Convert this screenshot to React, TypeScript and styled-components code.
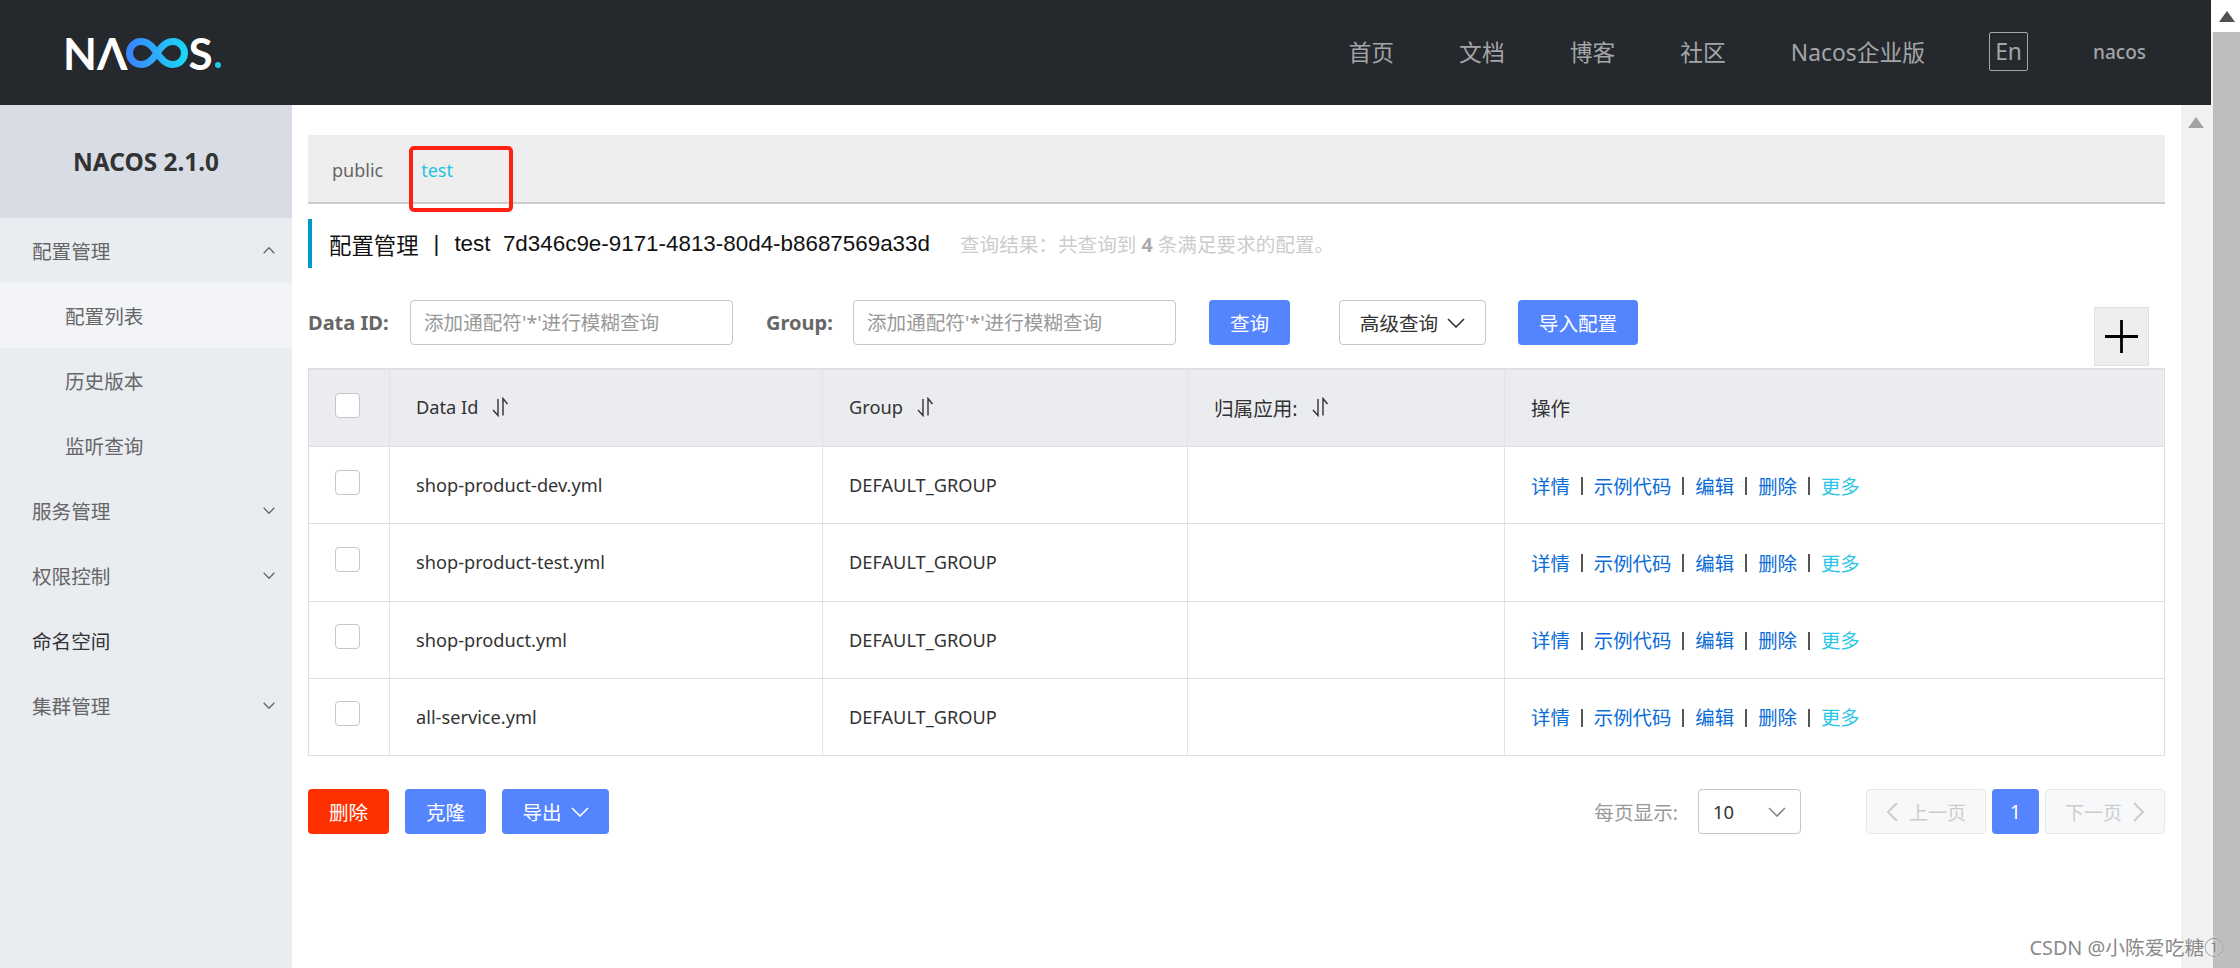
import React from 'react'
import styled, { createGlobalStyle } from 'styled-components'

const GlobalStyle = createGlobalStyle`
  html, body {
    margin: 0;
    padding: 0;
    height: 100%;
    overflow: hidden;
    background: #fff;
  }
  * {
    box-sizing: border-box;
  }
  body {
    font-family: "Noto Sans", "Noto Sans CJK SC", sans-serif;
    color: #333;
  }
`

const Page = styled.div`
  position: relative;
  display: flex;
  width: 2240px;
  height: 968px;
  overflow: hidden;
`

const Main = styled.div`
  flex: 1;
  min-width: 0;
  display: flex;
  flex-direction: column;
`

const OuterScrollbar = styled.div`
  width: 29px;
  display: flex;
  flex-direction: column;
  align-items: center;
  background: #f1f1f1;
`

const OuterScrollTop = styled.div`
  width: 100%;
  height: 32px;
  background: #fff;
  display: flex;
  align-items: center;
  justify-content: center;
  padding-left: 2px;
`

const OuterThumb = styled.div`
  flex: 1;
  width: 27px;
  margin-left: 2px;
  background: #bebebe;
`

const ScrollArrow = styled.div<{ $color: string }>`
  width: 0;
  height: 0;
  border-left: 8px solid transparent;
  border-right: 8px solid transparent;
  border-bottom: 11px solid ${(p) => p.$color};
`

const Header = styled.header`
  height: 105px;
  flex: none;
  display: flex;
  align-items: center;
  background: #25292e;
  padding-left: 63px;
  color: #a3a5a7;
`

const Logo = styled.div`
  display: flex;
  align-items: center;
  height: 30px;
  color: #fff;
  font-family: "Lato", sans-serif;
  font-weight: 700;
  font-size: 44px;
  line-height: 30px;
`

const LogoMark = styled.svg`
  width: 62px;
  height: 30px;
  fill: none;
  margin-left: -1px;
`

const LogoDot = styled.span`
  width: 6px;
  height: 6px;
  margin: 24px 0 0 2px;
  border-radius: 50%;
  background: #1fc8ea;
`

const Nav = styled.nav`
  margin-left: auto;
  display: flex;
  align-items: center;
  padding-right: 65px;
  margin-top: -2px;
`

const NavLink = styled.span`
  font-size: 22.8px;
  margin-right: 65px;
  white-space: nowrap;
`

const LangBox = styled.span`
  width: 39px;
  height: 39px;
  border: 1px solid #a3a5a7;
  border-radius: 2px;
  display: flex;
  align-items: center;
  justify-content: center;
  font-size: 22.8px;
  margin: 0 65px 0 -1px;
`

const UserName = styled.span`
  font-size: 19px;
  font-weight: 500;
`

const Body = styled.div`
  flex: 1;
  min-height: 0;
  display: flex;
`

const Sidebar = styled.aside`
  width: 292px;
  flex: none;
  background: #e9ecf1;
`

const SideTitle = styled.div`
  height: 113px;
  background: #d8dde5;
  display: flex;
  align-items: center;
  justify-content: center;
  font-size: 24.4px;
  font-weight: 700;
  color: #333;
`

const SideItem = styled.div<{ $sub?: boolean; $active?: boolean; $dark?: boolean }>`
  height: 65px;
  display: flex;
  align-items: center;
  justify-content: space-between;
  padding: 0 17px 0 ${(p) => (p.$sub ? 65 : 32)}px;
  font-size: 19.6px;
  color: ${(p) => (p.$dark ? '#333' : '#666')};
  background: ${(p) => (p.$active ? '#f2f4f8' : 'transparent')};
`

const Chevron = styled.svg<{ $up?: boolean; $w: number; $h: number; $color?: string; $weight?: number }>`
  width: ${(p) => p.$w}px;
  height: ${(p) => p.$h}px;
  flex: none;
  fill: none;
  stroke: ${(p) => p.$color || 'currentColor'};
  stroke-width: ${(p) => p.$weight || 1.6};
  transform: ${(p) => (p.$up ? 'rotate(180deg)' : 'none')};
`

const Down = ({ up, w, h, color, weight }: { up?: boolean; w: number; h: number; color?: string; weight?: number }) => (
  <Chevron $up={up} $w={w} $h={h} $color={color} $weight={weight} viewBox="0 0 18 10" preserveAspectRatio="none">
    <polyline points="1,1 9,9 17,1" vectorEffect="non-scaling-stroke" />
  </Chevron>
)

const PageArrow = styled.svg<{ $flip?: boolean }>`
  width: 12px;
  height: 20px;
  flex: none;
  fill: none;
  stroke: #ccc;
  stroke-width: 2;
  transform: ${(p) => (p.$flip ? 'scaleX(-1)' : 'none')};
`

const Content = styled.main`
  flex: 1;
  min-width: 0;
  padding: 30px 16px 0;
`

const InnerScrollbar = styled.div`
  width: 30px;
  flex: none;
  background: #f1f1f1;
  display: flex;
  justify-content: center;
  padding-top: 12px;
`

const TabBar = styled.div`
  position: relative;
  height: 69px;
  background: #eee;
  border-bottom: 2px solid #ccc;
  display: flex;
  align-items: center;
  padding: 2px 0 0 24px;
  gap: 38px;
`

const Tab = styled.span<{ $active?: boolean }>`
  font-size: 18px;
  color: ${(p) => (p.$active ? '#1fc2e0' : '#666')};
`

const RedMark = styled.div`
  position: absolute;
  left: 101px;
  top: 11px;
  width: 104px;
  height: 66px;
  border: 4.5px solid #ff2015;
  border-radius: 5px;
`

const TitleRow = styled.div`
  height: 49px;
  margin-top: 15px;
  border-left: 4px solid #09c;
  padding-left: 17px;
  display: flex;
  align-items: center;
  font-family: "Liberation Sans", "Noto Sans CJK SC", sans-serif;
  font-size: 22.4px;
  color: #111;
  white-space: pre;
`

const TitleSep = styled.span`
  margin: 0 15px;
`

const TitleHint = styled.span`
  margin-left: 30px;
  font-family: "Noto Sans", "Noto Sans CJK SC", sans-serif;
  font-size: 19.6px;
  color: #ccc;

  b {
    color: #aaa;
  }
`

const SearchRow = styled.div`
  height: 45px;
  margin-top: 32px;
  display: flex;
  align-items: flex-start;
`

const FieldLabel = styled.label<{ $w: number; $ml?: number }>`
  width: ${(p) => p.$w}px;
  height: 45px;
  margin-left: ${(p) => p.$ml || 0}px;
  flex: none;
  display: flex;
  align-items: center;
  font-size: 20px;
  font-weight: 700;
  color: #666;
  white-space: nowrap;
`

const TextInput = styled.input`
  width: 323px;
  height: 45px;
  padding: 0 13px;
  border: 1.5px solid #c4c6cf;
  border-radius: 4px;
  background: #fff;
  font-family: inherit;
  font-size: 19.6px;
  outline: none;

  &::placeholder {
    color: #999;
    opacity: 1;
  }
`

const Button = styled.button<{ $w: number; $tone?: 'primary' | 'normal' | 'danger'; $ml?: number }>`
  width: ${(p) => p.$w}px;
  height: 45px;
  margin-left: ${(p) => p.$ml || 0}px;
  flex: none;
  display: inline-flex;
  align-items: center;
  justify-content: center;
  gap: 9px;
  padding: 0;
  font-family: inherit;
  font-size: 19.6px;
  border-radius: 4px;
  border: ${(p) => (p.$tone === 'normal' ? '1.5px solid #c4c6cf' : 'none')};
  background: ${(p) => (p.$tone === 'danger' ? '#ff3000' : p.$tone === 'normal' ? '#fff' : '#5584ff')};
  color: ${(p) => (p.$tone === 'normal' ? '#333' : '#fff')};
`

const PlusButton = styled.div`
  width: 55px;
  height: 59px;
  margin: 7px 16px 0 auto;
  flex: none;
  display: flex;
  align-items: center;
  justify-content: center;
  background: #eee;
  border: 1.5px solid #e0e0e0;

  svg {
    width: 33px;
    height: 33px;
    stroke: #000;
    stroke-width: 2.8;
  }
`

const Table = styled.div`
  margin-top: 23px;
  border-top: 2px solid #dfe0e4;
  border-left: 1px solid #dcdde2;
  border-right: 1px solid #dcdde2;
`

const Row = styled.div<{ $head?: boolean }>`
  display: grid;
  grid-template-columns: 81px 433px 365px 317px 1fr;
  height: ${(p) => (p.$head ? '77px' : '77.25px')};
  background: ${(p) => (p.$head ? '#ebecf0' : '#fff')};
  border-bottom: 1.5px solid #dfe0e4;
`

const Cell = styled.div<{ $head?: boolean }>`
  display: flex;
  align-items: center;
  padding: 0 0 ${(p) => (p.$head ? 2 : 0)}px 26px;
  font-size: 18.2px;
  color: #333;
  border-right: 1px solid #e2e3e7;
  white-space: nowrap;

  &:last-child {
    border-right: none;
  }
`

const CheckCell = styled(Cell)`
  padding: 0 0 6px 26px;
`

const HeadCjk = styled.span`
  font-size: 19.6px;
`

const Checkbox = styled.span`
  width: 25px;
  height: 25px;
  border: 1.5px solid #c4c6cf;
  border-radius: 4px;
  background: #fff;
`

const SortIcon = styled.svg`
  width: 17px;
  height: 20px;
  margin-left: 14px;
  flex: none;
  fill: none;
  stroke: #333;
  stroke-width: 1.4;
`

const Sort = () => (
  <SortIcon viewBox="0 0 17 20">
    <polyline points="1,13 6,18.5 6,2" />
    <polyline points="11,18.5 11,1.5 15.5,7" />
  </SortIcon>
)

const Actions = styled.div`
  display: flex;
  align-items: center;
  font-size: 19.4px;
`

const ActionLink = styled.a<{ $more?: boolean }>`
  color: ${(p) => (p.$more ? '#2bc6e8' : '#0a6cd8')};
`

const ActionSep = styled.span`
  width: 2px;
  height: 18px;
  margin: 2px 11px 0;
  background: #555;
`

const Footer = styled.div`
  margin-top: 33px;
  display: flex;
  align-items: center;
`

const PageSize = styled.span`
  margin-left: auto;
  font-size: 19.6px;
  color: #999;
`

const SelectBox = styled.div`
  width: 103px;
  height: 45px;
  margin-left: 20px;
  padding: 0 14px;
  display: flex;
  align-items: center;
  justify-content: space-between;
  border: 1.5px solid #c4c6cf;
  border-radius: 4px;
  font-size: 18.4px;
  color: #333;
`

const PageButton = styled.div<{ $current?: boolean; $w: number; $ml: number }>`
  width: ${(p) => p.$w}px;
  height: 45px;
  margin-left: ${(p) => p.$ml}px;
  display: flex;
  align-items: center;
  justify-content: center;
  gap: 11px;
  border-radius: 4px;
  font-size: 19px;
  border: ${(p) => (p.$current ? 'none' : '1.5px solid #e6e7eb')};
  background: ${(p) => (p.$current ? '#5584ff' : '#f7f8fa')};
  color: ${(p) => (p.$current ? '#fff' : '#ccc')};
`

const Watermark = styled.div`
  position: absolute;
  right: 16px;
  bottom: 7px;
  font-size: 19.8px;
  color: #8a8a8a;
  text-shadow: 0 0 2px #fff;
  white-space: nowrap;
`

const rows = ['shop-product-dev.yml', 'shop-product-test.yml', 'shop-product.yml', 'all-service.yml']

const App: React.FC = () => {
  return (
    <Page>
      <GlobalStyle />
      <Main>
        <Header>
          <Logo aria-label="NACOS">
            <span>NΛ</span>
            <LogoMark viewBox="0 0 62 30">
              <defs>
                <linearGradient id="inf" x1="0" x2="1" y1="0" y2="0">
                  <stop offset="0" stopColor="#3a86ff" />
                  <stop offset="1" stopColor="#1cd4f6" />
                </linearGradient>
              </defs>
              <path
                d="M31 15C26 8 22 3.5 15 3.5A11.5 11.5 0 0 0 15 26.5C22 26.5 26 22 31 15C36 8 40 3.5 47 3.5A11.5 11.5 0 0 1 47 26.5C40 26.5 36 22 31 15Z"
                stroke="url(#inf)"
                strokeWidth="7"
              />
            </LogoMark>
            <span>S</span>
            <LogoDot />
          </Logo>
          <Nav>
            <NavLink>首页</NavLink>
            <NavLink>文档</NavLink>
            <NavLink>博客</NavLink>
            <NavLink>社区</NavLink>
            <NavLink>Nacos企业版</NavLink>
            <LangBox>En</LangBox>
            <UserName>nacos</UserName>
          </Nav>
        </Header>
        <Body>
          <Sidebar>
            <SideTitle>NACOS 2.1.0</SideTitle>
            <SideItem>
              配置管理
              <Down up w={12} h={7} color="#666" weight={1.3} />
            </SideItem>
            <SideItem $sub $active>配置列表</SideItem>
            <SideItem $sub>历史版本</SideItem>
            <SideItem $sub>监听查询</SideItem>
            {['服务管理', '权限控制'].map((t) => (
              <SideItem key={t}>
                {t}
                <Down w={12} h={7} color="#666" weight={1.3} />
              </SideItem>
            ))}
            <SideItem $dark>命名空间</SideItem>
            <SideItem>
              集群管理
              <Down w={12} h={7} color="#666" weight={1.3} />
            </SideItem>
          </Sidebar>
          <Content>
            <TabBar>
              <Tab>public</Tab>
              <Tab $active>test</Tab>
              <RedMark />
            </TabBar>
            <TitleRow>
              配置管理<TitleSep>|</TitleSep>test  7d346c9e-9171-4813-80d4-b8687569a33d
              <TitleHint>
                查询结果：共查询到 <b>4</b> 条满足要求的配置。
              </TitleHint>
            </TitleRow>
            <SearchRow>
              <FieldLabel $w={102}>Data ID:</FieldLabel>
              <TextInput placeholder="添加通配符'*'进行模糊查询" />
              <FieldLabel $w={87} $ml={33}>Group:</FieldLabel>
              <TextInput placeholder="添加通配符'*'进行模糊查询" />
              <Button $w={81} $ml={33}>查询</Button>
              <Button $w={147} $ml={49} $tone="normal">
                高级查询 <Down w={18} h={10} />
              </Button>
              <Button $w={120} $ml={32}>导入配置</Button>
              <PlusButton>
                <svg viewBox="0 0 33 33">
                  <line x1="0" y1="16.5" x2="33" y2="16.5" />
                  <line x1="16.5" y1="0" x2="16.5" y2="33" />
                </svg>
              </PlusButton>
            </SearchRow>
            <Table>
              <Row $head>
                <CheckCell><Checkbox /></CheckCell>
                <Cell $head>Data Id<Sort /></Cell>
                <Cell $head>Group<Sort /></Cell>
                <Cell $head><HeadCjk>归属应用:</HeadCjk><Sort /></Cell>
                <Cell $head><HeadCjk>操作</HeadCjk></Cell>
              </Row>
              {rows.map((name) => (
                <Row key={name}>
                  <CheckCell><Checkbox /></CheckCell>
                  <Cell>{name}</Cell>
                  <Cell>DEFAULT_GROUP</Cell>
                  <Cell />
                  <Cell>
                    <Actions>
                      <ActionLink>详情</ActionLink>
                      <ActionSep />
                      <ActionLink>示例代码</ActionLink>
                      <ActionSep />
                      <ActionLink>编辑</ActionLink>
                      <ActionSep />
                      <ActionLink>删除</ActionLink>
                      <ActionSep />
                      <ActionLink $more>更多</ActionLink>
                    </Actions>
                  </Cell>
                </Row>
              ))}
            </Table>
            <Footer>
              <Button $w={81} $tone="danger">删除</Button>
              <Button $w={81} $ml={16}>克隆</Button>
              <Button $w={107} $ml={16}>
                导出 <Down w={18} h={10} color="#fff" />
              </Button>
              <PageSize>每页显示:</PageSize>
              <SelectBox>
                10 <Down w={18} h={10} color="#888" />
              </SelectBox>
              <PageButton $w={120} $ml={65}>
                <PageArrow viewBox="0 0 12 20"><polyline points="11,1 2,10 11,19" /></PageArrow>
                上一页
              </PageButton>
              <PageButton $w={47} $ml={6} $current>1</PageButton>
              <PageButton $w={120} $ml={6}>
                下一页
                <PageArrow $flip viewBox="0 0 12 20"><polyline points="11,1 2,10 11,19" /></PageArrow>
              </PageButton>
            </Footer>
          </Content>
          <InnerScrollbar>
            <ScrollArrow $color="#a3a3a3" />
          </InnerScrollbar>
        </Body>
      </Main>
      <OuterScrollbar>
        <OuterScrollTop>
          <ScrollArrow $color="#505050" />
        </OuterScrollTop>
        <OuterThumb />
      </OuterScrollbar>
      <Watermark>CSDN @小陈爱吃糖①</Watermark>
    </Page>
  )
}

export default App
